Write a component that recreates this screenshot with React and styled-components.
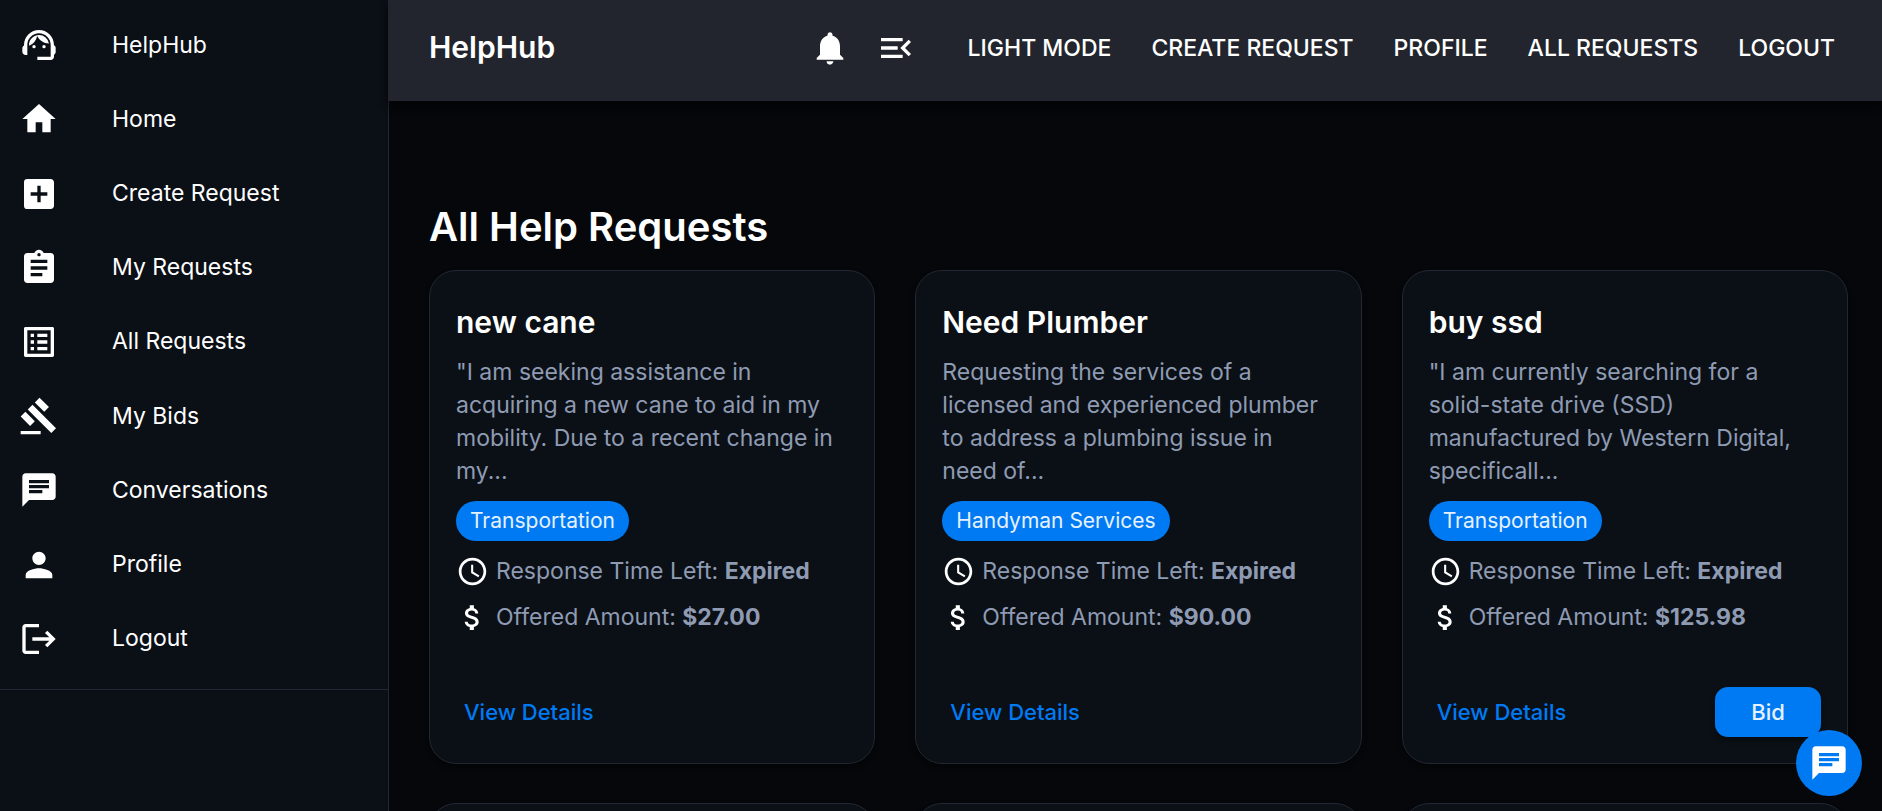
import React from "react";
import styled, { createGlobalStyle } from "styled-components";
import {
  MdSupportAgent, MdHome, MdAddBox, MdAssignment, MdListAlt, MdGavel, MdChat,
  MdPerson, MdLogout, MdNotifications, MdMenuOpen, MdAccessTime, MdAttachMoney,
} from "react-icons/md";

const Global = createGlobalStyle`
  *, *::before, *::after { box-sizing: border-box; }
  body {
    margin: 0;
    background: #05070a;
    color: #fff;
    font-family: Inter, "Liberation Sans", sans-serif;
    font-size: 23px;
    line-height: 33px;
  }
  h1, h2, p, ul { margin: 0; padding: 0; }
  ul { list-style: none; }
  a { color: inherit; text-decoration: none; }
  button { font: inherit; color: inherit; border: 0; background: none; padding: 0; cursor: pointer; }
  svg { display: block; flex: none; }
`;

const Shell = styled.div`
  display: flex;
  height: 100vh;
  overflow: hidden;
`;

const Sidebar = styled.nav`
  flex: 0 0 389px;
  background: #0b0f16;
  border-right: 1px solid #232733;
`;

const SideList = styled.ul`
  display: grid;
  grid-auto-rows: 1fr;
  min-height: 690px;
  padding: 8px 0 13px;
  border-bottom: 1px solid #232733;
`;

const SideLink = styled.a`
  display: flex;
  align-items: center;
  gap: 53px;
  height: 100%;
  padding: 0 19px;
`;

const Page = styled.div`
  flex: 1;
  min-width: 0;
  display: flex;
  flex-direction: column;
`;

const Header = styled.header`
  position: relative;
  z-index: 1;
  flex: none;
  display: flex;
  align-items: center;
  justify-content: space-between;
  margin-left: -1px;
  padding: 28px 47px 33px 41px;
  background: #22252d;
  box-shadow: 0 3px 7px rgba(0, 0, 0, 0.4), 0 7px 9px rgba(0, 0, 0, 0.25);
`;

const Brand = styled.a`
  font-size: 30px;
  line-height: 38px;
  padding-bottom: 2px;
  font-weight: 600;
`;

const HeaderMenu = styled.div`
  display: flex;
  align-items: center;
  gap: 40px;
  font-weight: 500;
`;

const HeaderIcons = styled.div`
  display: flex;
  gap: 26px;
  margin-right: 12px;
`;

const HeaderAction = styled.button`
  text-transform: uppercase;
`;

const Main = styled.main`
  padding: 98px 34px 40px 40px;
`;

const Title = styled.h1`
  font-size: 40px;
  line-height: 56px;
  font-weight: 600;
  margin-bottom: 15px;
`;

const Grid = styled.div`
  display: grid;
  grid-template-columns: repeat(3, 1fr);
  gap: 39px 40px;
`;

const Card = styled.article`
  display: flex;
  flex-direction: column;
  align-items: flex-start;
  min-height: 494px;
  padding: 27px 26px 26px;
  background: #0b1016;
  border: 1px solid #232733;
  border-radius: 27px;
  box-shadow: 0 3px 5px rgba(0, 0, 0, 0.4);
`;

const CardTitle = styled.h2`
  font-size: 30px;
  line-height: 48px;
  font-weight: 600;
  margin-bottom: 10px;
`;

const Description = styled.p`
  padding-right: 8px;
  color: #8f9bb3;
`;

const Chip = styled.span`
  height: 40px;
  margin: 13px 0 10px;
  padding: 0 14px;
  border-radius: 20px;
  background: #007af3;
  color: #e6f1ff;
  font-size: 21px;
  line-height: 40px;
`;

const Fact = styled.div`
  display: flex;
  align-items: center;
  gap: 7px;
  height: 40px;
  margin-bottom: 6px;
  color: #8f9bb3;
  svg { color: #fff; }
`;

const Actions = styled.div`
  display: flex;
  align-items: center;
  justify-content: space-between;
  width: 100%;
  height: 50px;
  margin-top: auto;
  font-size: 22px;
  font-weight: 500;
`;

const DetailsLink = styled.a`
  padding: 0 8px;
  color: #007af3;
`;

const BidButton = styled.button`
  width: 106px;
  height: 50px;
  border-radius: 13px;
  background: #007af3;
  color: #e6f1ff;
  box-shadow: 0 3px 5px rgba(0, 0, 0, 0.4);
`;

const ChatButton = styled.button`
  position: fixed;
  z-index: 2;
  right: 20px;
  bottom: 15px;
  display: grid;
  place-items: center;
  width: 66px;
  height: 66px;
  border-radius: 50%;
  background: #007af3;
`;

const sideItems = [
  ["HelpHub", MdSupportAgent],
  ["Home", MdHome],
  ["Create Request", MdAddBox],
  ["My Requests", MdAssignment],
  ["All Requests", MdListAlt],
  ["My Bids", MdGavel],
  ["Conversations", MdChat],
  ["Profile", MdPerson],
  ["Logout", MdLogout],
];

const actions = ["Light Mode", "Create Request", "Profile", "All Requests", "Logout"];

const requests = [
  {
    title: "new cane",
    text: "\"I am seeking assistance in acquiring a new cane to aid in my mobility. Due to a recent change in my...",
    category: "Transportation",
    amount: "$27.00",
  },
  {
    title: "Need Plumber",
    text: "Requesting the services of a licensed and experienced plumber to address a plumbing issue in need of...",
    category: "Handyman Services",
    amount: "$90.00",
  },
  {
    title: "buy ssd",
    text: "\"I am currently searching for a solid-state drive (SSD) manufactured by Western Digital, specificall...",
    category: "Transportation",
    amount: "$125.98",
    canBid: true,
  },
];

function RequestCard({ title, text, category, amount, canBid }) {
  return (
    <Card>
      <CardTitle>{title}</CardTitle>
      <Description>{text}</Description>
      <Chip>{category}</Chip>
      <Fact>
        <MdAccessTime size={33} />
        <p>Response Time Left: <b>Expired</b></p>
      </Fact>
      <Fact>
        <MdAttachMoney size={33} />
        <p>Offered Amount: <b>{amount}</b></p>
      </Fact>
      <Actions>
        <DetailsLink href="#details">View Details</DetailsLink>
        {canBid && <BidButton type="button">Bid</BidButton>}
      </Actions>
    </Card>
  );
}

export default function App() {
  return (
    <>
      <Global />
      <Shell>
        <Sidebar>
          <SideList>
            {sideItems.map(([label, Icon]) => (
              <li key={label}>
                <SideLink href="#">
                  <Icon size={40} />
                  {label}
                </SideLink>
              </li>
            ))}
          </SideList>
        </Sidebar>
        <Page>
          <Header>
            <Brand href="#">HelpHub</Brand>
            <HeaderMenu>
              <HeaderIcons>
                <button type="button" aria-label="Notifications"><MdNotifications size={40} /></button>
                <button type="button" aria-label="Toggle menu"><MdMenuOpen size={40} /></button>
              </HeaderIcons>
              {actions.map((label) => (
                <HeaderAction type="button" key={label}>{label}</HeaderAction>
              ))}
            </HeaderMenu>
          </Header>
          <Main>
            <Title>All Help Requests</Title>
            <Grid>
              {requests.map((r) => <RequestCard key={r.title} {...r} />)}
              <Card />
              <Card />
              <Card />
            </Grid>
          </Main>
        </Page>
        <ChatButton type="button" aria-label="Chat"><MdChat size={40} /></ChatButton>
      </Shell>
    </>
  );
}
